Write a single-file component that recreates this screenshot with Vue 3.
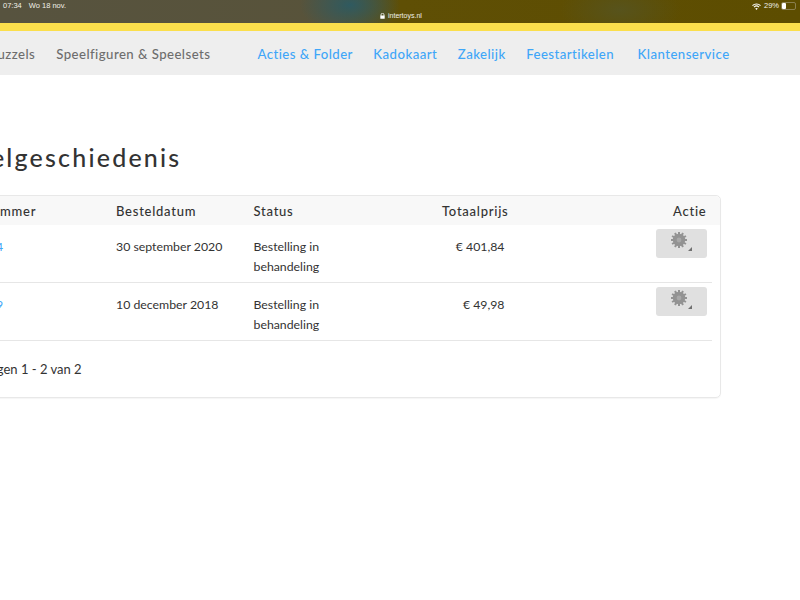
<script setup>
const mainLinks = ['Puzzels', 'Speelfiguren & Speelsets']
const blueLinks = ['Acties & Folder', 'Kadokaart', 'Zakelijk', 'Feestartikelen', 'Klantenservice']
const orders = [
  { id: '4', date: '30 september 2020', status: 'Bestelling in behandeling', price: '€ 401,84' },
  { id: '9', date: '10 december 2018', status: 'Bestelling in behandeling', price: '€ 49,98' }
]
</script>

<template>
  <div class="page">
    <div class="statusbar">
      <div class="status-left"><span>07:34</span><span>Wo 18 nov.</span></div>
      <div class="url">
        <svg width="5" height="6" viewBox="0 0 5 6"><path d="M1 3V1.8a1.5 1.5 0 0 1 3 0V3" fill="none" stroke="#fff" stroke-width=".8"/><rect x=".3" y="2.6" width="4.4" height="3.2" rx=".5" fill="#fff"/></svg>
        <span>intertoys.nl</span>
      </div>
      <div class="status-right">
        <svg width="9" height="7" viewBox="0 0 9 7" fill="none" stroke="#fff" stroke-width="1.1"><path d="M.5 2.6a5.7 5.7 0 0 1 8 0"/><path d="M2 4.1a3.6 3.6 0 0 1 5 0"/><path d="M4.5 7 3.2 5.6a1.9 1.9 0 0 1 2.6 0z" fill="#fff" stroke="none"/></svg>
        <span>29%</span>
        <span class="battery"><i class="level"></i></span>
      </div>
    </div>
    <div class="stripe"></div>
    <nav class="nav">
      <a v-for="l in mainLinks" :key="l" class="nav-grey">{{ l }}</a>
      <div class="nav-blue"><a v-for="l in blueLinks" :key="l">{{ l }}</a></div>
    </nav>
    <main class="content">
      <h1>Bestelgeschiedenis</h1>
      <section class="card">
        <div class="row head">
          <div class="num">Bestelnummer</div><div>Besteldatum</div><div>Status</div>
          <div class="price head-price">Totaalprijs</div><div class="action">Actie</div>
        </div>
        <div v-for="o in orders" :key="o.id" class="row body">
          <div class="num-cell"><a>{{ o.id }}</a></div>
          <div>{{ o.date }}</div>
          <div class="status">{{ o.status }}</div>
          <div class="price">{{ o.price }}</div>
          <div class="action">
            <button class="gear-btn" aria-label="Actie">
              <svg width="26" height="24" viewBox="0 0 26 24">
                <g fill="#939393" transform="translate(10 11)">
                  <circle r="6.2"/>
                  <rect v-for="n in 12" :key="n" x="-1" y="-8" width="2" height="3" :transform="`rotate(${n * 30})`"/>
                  <circle r="2.4" fill="#a8a8a8"/>
                </g>
                <path d="M23 18v4h-4z" fill="#707070"/>
              </svg>
            </button>
          </div>
        </div>
        <p class="summary">Bestellingen 1 - 2 van 2</p>
      </section>
    </main>
  </div>
</template>

<style scoped>
.page {
  width: 800px;
  height: 600px;
  overflow: hidden;
  background: #fff;
  font-family: Lato, "Liberation Sans", sans-serif;
  color: #333;
}
.statusbar {
  height: 23px;
  position: relative;
  box-sizing: border-box;
  padding: 2px 3px 0;
  display: flex;
  justify-content: space-between;
  color: #f0f0e8;
  font-size: 7.5px;
  line-height: 8px;
  font-family: "Liberation Sans", sans-serif;
  background:
    radial-gradient(ellipse 50px 30px at 350px 5px, #2f5a60 0%, rgba(47, 90, 96, 0) 100%),
    radial-gradient(ellipse 60px 30px at 620px 10px, #57531c 0%, rgba(87, 83, 28, 0) 100%),
    linear-gradient(90deg, #57533f 0%, #58533a 42%, #5f4f05 50%, #5d4d00 100%);
}
.status-left { display: flex; gap: 7px; }
.status-right { display: flex; gap: 3px; align-items: center; height: 8px; }
.url {
  position: absolute;
  left: 380px;
  top: 12px;
  display: flex;
  gap: 3px;
  align-items: center;
  font-size: 7px;
}
.battery {
  display: block;
  width: 13px;
  height: 6px;
  border: 1px solid #8a7f50;
  border-radius: 2px;
  margin-left: -1px;
  margin-right: 1px;
}
.level { display: block; width: 4px; height: 6px; background: #fff; border-radius: 1px; }
.stripe { height: 8px; background: #fbdf4c; }
.nav {
  height: 44px;
  background: #eeeeee;
  display: flex;
  align-items: center;
  margin-left: -11px;
  padding-top: 1px;
  box-sizing: border-box;
  font-size: 13.2px;
  font-weight: 500;
  letter-spacing: .45px;
  white-space: nowrap;
}
.nav-grey { color: #6d6d6d; margin-right: 21px; }
.nav-blue { display: flex; gap: 20.5px; margin-left: 26px; color: #3fa6f8; }
.nav-blue a:last-child { margin-left: 3px; }
.content { margin-left: -100px; width: 821px; padding-top: 68px; }
h1 {
  margin: 0 0 23px 33px;
  font-size: 25px;
  line-height: 29px;
  font-weight: 500;
  letter-spacing: 2.2px;
  color: #333;
  text-align: left;
}
.card {
  box-sizing: border-box;
  height: 203px;
  border: 1px solid #e8e8e8;
  border-radius: 5px;
  font-size: 12.3px;
  box-shadow: 0 1px 1px rgba(0, 0, 0, .04);
}
.row {
  display: grid;
  grid-template-columns: 215px 137.5px 140px 115px 198px;
  margin-right: 8px;
}
.head {
  height: 29px;
  align-items: center;
  background: #f8f8f8;
  font-size: 13px;
  letter-spacing: .75px;
  margin-right: 0;
  padding-right: 14px;
  border-radius: 5px 5px 0 0;
  font-weight: 500;
}
.num { padding-left: 43px; }
.num-cell { padding-left: 95px; color: #3fa6f8; }
.body {
  box-sizing: border-box;
  height: 58px;
  padding-top: 4px;
  border-bottom: 1px solid #e6e6e6;
  line-height: 20px;
}
.body > div:not(.action) { padding-top: 8px; }
.status { width: 80px; }
.price { text-align: right; padding-right: 4px; }
.head-price { padding-right: 0; }
.action { text-align: right; }
.gear-btn {
  width: 51px;
  height: 29px;
  border: 0;
  padding: 0 0 0 13px;
  display: flex;
  background: #e0e0e0;
  border-radius: 3px;
  margin-left: auto;
}
.summary { margin: 19px 0 0 47px; line-height: 18px; font-size: 13px; }
</style>

<style>
html, body { margin: 0; background: #fff; }
</style>
